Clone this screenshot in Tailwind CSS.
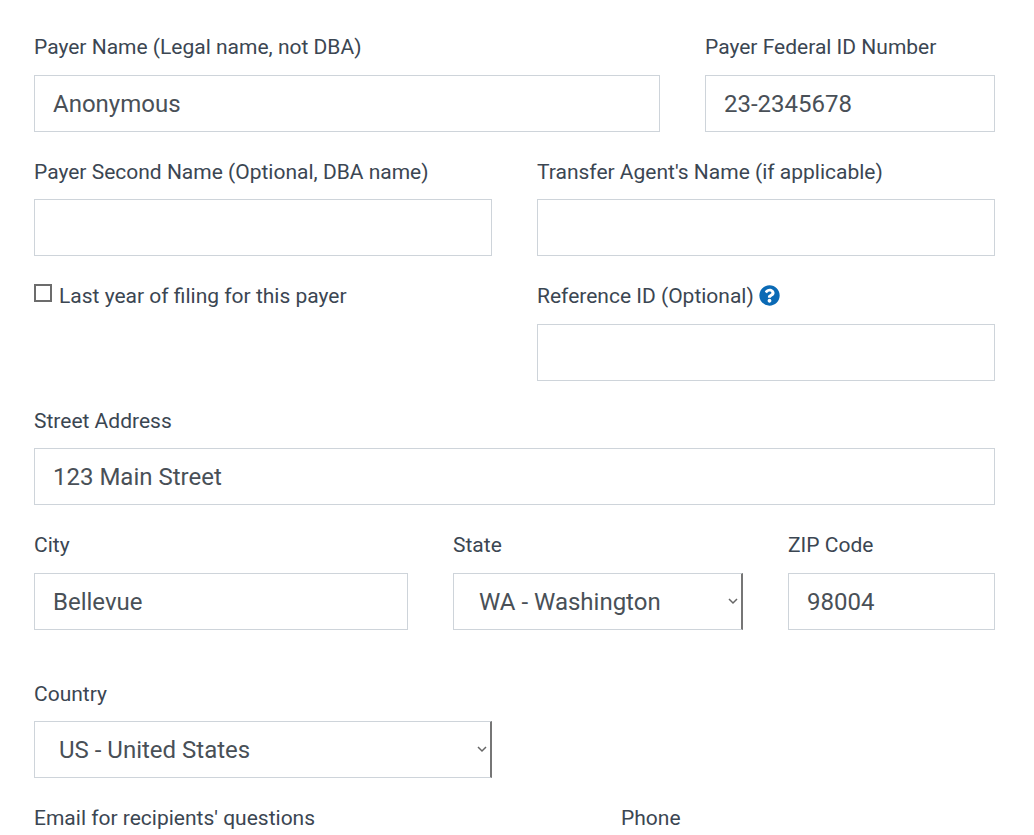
<!doctype html>
<html lang="en">
  <head>
    <meta charset="UTF-8" />
    <title>Payer details</title>
    <script src="https://cdn.jsdelivr.net/npm/@tailwindcss/browser@4"></script>
  </head>
  <body class="h-screen overflow-hidden bg-white font-['Roboto',sans-serif] text-[#3b4652]">
    <form class="pt-[33px] pl-[34px] pr-[39px]">
      <!-- Payer name + federal id -->
      <div class="flex gap-[45px] mb-[25.75px]">
        <div class="w-[626px]">
          <label for="name" class="block h-[28px] mb-[13.75px] text-[21px] leading-[28px]">Payer Name (Legal name, not DBA)</label>
          <input id="name" value="Anonymous" class="block w-full h-[57px] px-[18px] pt-[1px] border border-[#ced4da] text-[24px] text-[#495057] outline-none" />
        </div>
        <div class="w-[290px]">
          <label for="fein" class="block h-[28px] mb-[13.75px] text-[21px] leading-[28px]">Payer Federal ID Number</label>
          <input id="fein" value="23-2345678" class="block w-full h-[57px] px-[18px] pt-[1px] border border-[#ced4da] text-[24px] text-[#495057] outline-none" />
        </div>
      </div>

      <div class="flex gap-[45px] mb-[25.75px]">
        <div class="w-[458px]">
          <label for="second" class="block h-[28px] mb-[13.75px] text-[21px] leading-[28px]">Payer Second Name (Optional, DBA name)</label>
          <input id="second" class="block w-full h-[57px] px-[18px] border border-[#ced4da] text-[24px] text-[#495057] outline-none" />
        </div>
        <div class="w-[458px]">
          <label for="agent" class="block h-[28px] mb-[13.75px] text-[21px] leading-[28px]">Transfer Agent's Name (if applicable)</label>
          <input id="agent" class="block w-full h-[57px] px-[18px] border border-[#ced4da] text-[24px] text-[#495057] outline-none" />
        </div>
      </div>

      <div class="flex gap-[45px] mb-[25.75px]">
        <div class="w-[458px]">
          <label class="flex items-start h-[28px] gap-[7px] text-[21px] leading-[28px]">
            <input type="checkbox" class="appearance-none mt-[2px] w-[18px] h-[18px] border-2 border-[#6c6c6c] bg-white" />
            Last year of filing for this payer
          </label>
        </div>
        <div class="w-[458px]">
          <label for="ref" class="flex items-center gap-[5px] h-[28px] mb-[13.75px] text-[21px] leading-[28px]">
            Reference ID (Optional)
            <svg class="w-[21px] h-[21px] text-[#0b6ab5] -mt-[1px]" viewBox="0 0 512 512" fill="currentColor"><path d="M504 256c0 136.997-111.043 248-248 248S8 392.997 8 256C8 119.083 119.043 8 256 8s248 111.083 248 248zM262.655 90c-54.497 0-89.255 22.957-116.549 63.758-3.536 5.286-2.353 12.415 2.715 16.258l34.699 26.31c5.205 3.947 12.621 3.008 16.665-2.122 17.864-22.658 30.113-35.797 57.303-35.797 20.429 0 45.698 13.148 45.698 32.958 0 14.976-12.363 22.667-32.534 33.976C247.128 238.528 216 254.941 216 296v4c0 6.627 5.373 12 12 12h56c6.627 0 12-5.373 12-12v-1.333c0-28.462 83.186-29.647 83.186-106.667 0-58.002-60.165-102-116.531-102zM256 338c-25.365 0-46 20.635-46 46 0 25.364 20.635 46 46 46s46-20.636 46-46c0-25.365-20.635-46-46-46z"/></svg>
          </label>
          <input id="ref" class="block w-full h-[57px] px-[18px] border border-[#ced4da] text-[24px] text-[#495057] outline-none" />
        </div>
      </div>

      <div class="mb-[25.75px]">
        <label for="street" class="block h-[28px] mb-[13.75px] text-[21px] leading-[28px]">Street Address</label>
        <input id="street" value="123 Main Street" class="block w-full h-[57px] px-[18px] border border-[#ced4da] text-[24px] text-[#495057] outline-none" />
      </div>

      <div class="flex mb-[49.75px]">
        <div class="w-[374px] mr-[45px]">
          <label for="city" class="block h-[28px] mb-[13.75px] text-[21px] leading-[28px]">City</label>
          <input id="city" value="Bellevue" class="block w-full h-[57px] px-[18px] pt-[1px] border border-[#ced4da] text-[24px] text-[#495057] outline-none" />
        </div>
        <div class="w-[290px] mr-[45px]">
          <label for="state" class="block h-[28px] mb-[13.75px] text-[21px] leading-[28px]">State</label>
          <div class="relative">
            <select id="state" class="block w-full h-[57px] pl-[25px] pt-[1px] appearance-none border border-[#ced4da] border-r-2 border-r-[#767676] bg-white text-[24px] text-[#495057] outline-none">
              <option>WA - Washington</option>
            </select>
            <svg class="absolute right-[5px] top-[25px] w-[10px] h-[7px] text-[#666]" viewBox="0 0 10 7" fill="none" stroke="currentColor" stroke-width="1.5"><path d="M1 1l4 4 4-4"/></svg>
          </div>
        </div>
        <div class="w-[207px]">
          <label for="zip" class="block h-[28px] mb-[13.75px] text-[21px] leading-[28px]">ZIP Code</label>
          <input id="zip" value="98004" class="block w-full h-[57px] px-[18px] pt-[1px] border border-[#ced4da] text-[24px] text-[#495057] outline-none" />
        </div>
      </div>

      <div class="mb-[25.75px]">
        <label for="country" class="block h-[28px] mb-[13.75px] text-[21px] leading-[28px]">Country</label>
        <div class="relative w-[458px]">
          <select id="country" class="block w-full h-[57px] pl-[24px] appearance-none border border-[#ced4da] border-r-2 border-r-[#767676] bg-white text-[24px] text-[#495057] outline-none">
            <option>US - United States</option>
          </select>
          <svg class="absolute right-[5px] top-[25px] w-[10px] h-[7px] text-[#666]" viewBox="0 0 10 7" fill="none" stroke="currentColor" stroke-width="1.5"><path d="M1 1l4 4 4-4"/></svg>
        </div>
      </div>

      <div class="flex">
        <div class="w-[587px]">
          <label for="email" class="block h-[28px] text-[21px] leading-[28px]">Email for recipients' questions</label>
        </div>
        <div>
          <label for="phone" class="block h-[28px] text-[21px] leading-[28px]">Phone</label>
        </div>
      </div>
    </form>
  </body>
</html>
